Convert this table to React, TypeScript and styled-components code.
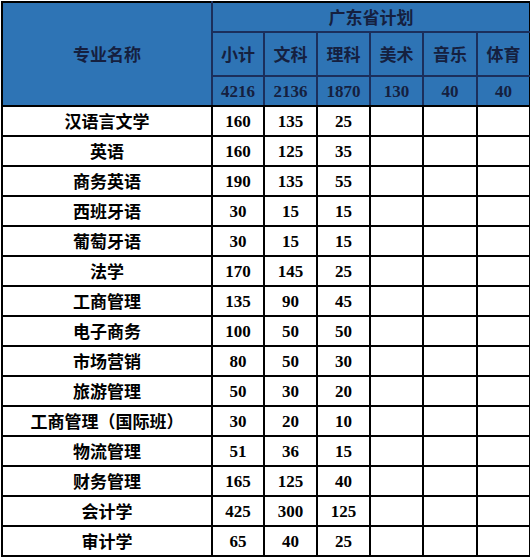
import React from 'react';
import styled, { createGlobalStyle } from 'styled-components';

interface MajorRow {
  name: string;
  total: number;
  arts: number;
  science: number;
}

const rows: MajorRow[] = [
  { name: '汉语言文学', total: 160, arts: 135, science: 25 },
  { name: '英语', total: 160, arts: 125, science: 35 },
  { name: '商务英语', total: 190, arts: 135, science: 55 },
  { name: '西班牙语', total: 30, arts: 15, science: 15 },
  { name: '葡萄牙语', total: 30, arts: 15, science: 15 },
  { name: '法学', total: 170, arts: 145, science: 25 },
  { name: '工商管理', total: 135, arts: 90, science: 45 },
  { name: '电子商务', total: 100, arts: 50, science: 50 },
  { name: '市场营销', total: 80, arts: 50, science: 30 },
  { name: '旅游管理', total: 50, arts: 30, science: 20 },
  { name: '工商管理（国际班）', total: 30, arts: 20, science: 10 },
  { name: '物流管理', total: 51, arts: 36, science: 15 },
  { name: '财务管理', total: 165, arts: 125, science: 40 },
  { name: '会计学', total: 425, arts: 300, science: 125 },
  { name: '审计学', total: 65, arts: 40, science: 25 },
];

const categories = ['小计', '文科', '理科', '美术', '音乐', '体育'];
const sums = [4216, 2136, 1870, 130, 40, 40];
const colWidths = [210, 52, 53, 53, 53, 54, 53];

const GlobalStyle = createGlobalStyle`
  html, body {
    margin: 0;
    padding: 0;
    background: #ffffff;
  }
`;

const Frame = styled.div`
  padding: 1px;
  width: 530px;
  box-sizing: border-box;
`;

const Table = styled.table`
  width: 528px;
  table-layout: fixed;
  border-collapse: collapse;
  font-family: 'Liberation Serif', 'Noto Sans CJK SC', serif;
  font-weight: 700;
`;

const Col = styled.col<{ $w: number }>`
  width: ${({ $w }) => $w}px;
`;

// blue header cell; $edge marks sides that meet the black outer frame
const HeadCell = styled.th<{ $h?: number; $top?: boolean; $left?: boolean; $right?: boolean; $bottom?: boolean }>`
  height: ${({ $h }) => ($h ? `${$h}px` : 'auto')};
  padding: 0;
  background: #2e74b5;
  color: #15203f;
  border: 2px solid #1b2f5c;
  border-top-color: ${({ $top }) => ($top ? '#000' : '#1b2f5c')};
  border-left-color: ${({ $left }) => ($left ? '#000' : '#1b2f5c')};
  border-right-color: ${({ $right }) => ($right ? '#000' : '#1b2f5c')};
  border-bottom-color: ${({ $bottom }) => ($bottom ? '#000' : '#1b2f5c')};
  font-size: 17px;
  font-weight: 700;
  text-align: center;
  vertical-align: middle;
  line-height: 1;
`;

const BodyCell = styled.td`
  height: 28px;
  padding: 0;
  color: #000000;
  border: 2px solid #000000;
  font-size: 17px;
  text-align: center;
  vertical-align: middle;
  line-height: 1;
`;

const CjkText = styled.span`
  font-family: 'Noto Sans CJK SC', sans-serif;
  font-size: 17px;
  font-weight: 700;
`;

const App: React.FC = () => (
  <>
    <GlobalStyle />
    <Frame>
      <Table>
        <colgroup>
          {colWidths.map((w, i) => (
            <Col key={i} $w={w} />
          ))}
        </colgroup>
        <thead>
          <tr>
            <HeadCell rowSpan={3} $top $left $bottom>
              <CjkText>专业名称</CjkText>
            </HeadCell>
            <HeadCell colSpan={6} $h={28} $top $right>
              <CjkText>广东省计划</CjkText>
            </HeadCell>
          </tr>
          <tr>
            {categories.map((c, i) => (
              <HeadCell key={c} $h={42} $right={i === categories.length - 1}>
                <CjkText>{c}</CjkText>
              </HeadCell>
            ))}
          </tr>
          <tr>
            {sums.map((s, i) => (
              <HeadCell key={i} $h={28} $bottom $right={i === sums.length - 1}>
                {s}
              </HeadCell>
            ))}
          </tr>
        </thead>
        <tbody>
          {rows.map((r) => (
            <tr key={r.name}>
              <BodyCell>
                <CjkText>{r.name}</CjkText>
              </BodyCell>
              <BodyCell>{r.total}</BodyCell>
              <BodyCell>{r.arts}</BodyCell>
              <BodyCell>{r.science}</BodyCell>
              <BodyCell />
              <BodyCell />
              <BodyCell />
            </tr>
          ))}
        </tbody>
      </Table>
    </Frame>
  </>
);

export default App;
